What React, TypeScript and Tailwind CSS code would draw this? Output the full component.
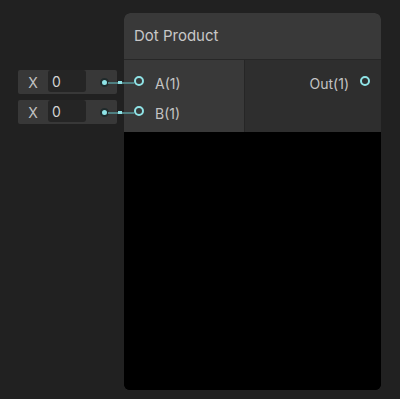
import React from "react";

const font = { fontFamily: "Inter, 'Noto Sans', sans-serif" };

function InputField({ top }: { top: number }) {
  return (
    <div className="absolute left-[18px] flex items-center" style={{ top }}>
      <div className="flex h-[24px] w-[99px] items-center rounded-[2px] bg-[#383838]">
        <span className="w-[30px] text-center text-[14px] text-[#c2c2c2]">X</span>
        <div className="flex h-[22px] w-[38px] items-center self-start rounded-[3px] bg-[#252525] pl-[4px] text-[14px] text-[#d2d2d2]">
          0
        </div>
        <div className="ml-[14px] h-[9px] w-[9px] rounded-full border-[2px] border-[#1f2a2b] bg-[#8fe3e6]" />
      </div>
      <div className="absolute left-[90px] top-[11px] flex items-center">
        <div className="h-[2px] w-[10px] bg-[#4f7f81]" />
        <div className="h-[3px] w-[4px] bg-[#8fe3e6]" />
        <div className="h-[2px] w-[12px] bg-[#4f7f81]" />
      </div>
    </div>
  );
}

function Port({ label }: { label: string }) {
  return (
    <div className="flex h-[30px] items-center pl-[10px]">
      <div className="h-[10px] w-[10px] rounded-full border-[2px] border-[#8fe3e6]" />
      <span className="ml-[11px] mt-[4px] text-[14px] text-[#c4c4c4]">{label}</span>
    </div>
  );
}

export default function App() {
  return (
    <div className="relative h-[399px] w-[400px] overflow-hidden bg-[#212121]" style={font}>
      <div className="absolute left-[124px] top-[13px] flex h-[377px] w-[257px] flex-col overflow-hidden rounded-[6px] bg-black">
        <div className="flex h-[47px] items-center border-b border-[#272727] bg-[#393939] pl-[10px] text-[15px] text-[#c8c8c8]">
          Dot Product
        </div>
        <div className="flex h-[72px]">
          <div className="w-[121px] border-r border-[#262626] bg-[#393939] pt-[6px]">
            <Port label="A(1)" />
            <Port label="B(1)" />
          </div>
          <div className="flex-1 bg-[#2e2e2e] pt-[6px]">
            <div className="flex h-[30px] items-center justify-end pr-[11px]">
              <span className="mt-[4px] text-[14px] text-[#c4c4c4]">Out(1)</span>
              <div className="ml-[11px] h-[10px] w-[10px] rounded-full border-[2px] border-[#8fe3e6]" />
            </div>
          </div>
        </div>
        <div className="flex-1 bg-black" />
      </div>
      <InputField top={70} />
      <InputField top={100} />
    </div>
  );
}
